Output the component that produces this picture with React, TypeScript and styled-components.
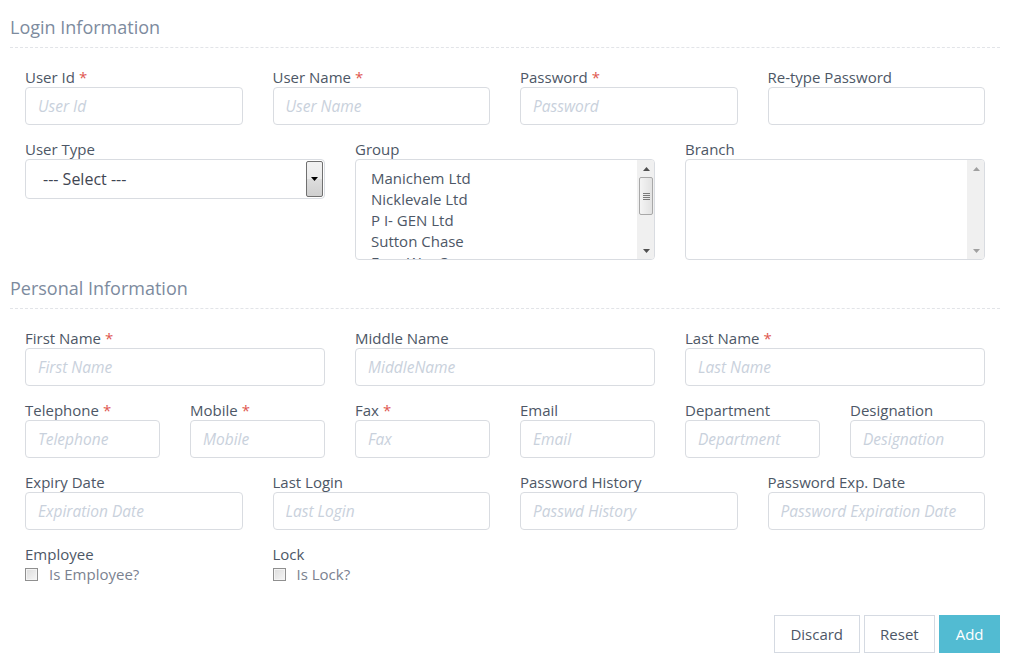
import React from "react";
import styled, { createGlobalStyle } from "styled-components";

const Global = createGlobalStyle`
  html, body { margin: 0; padding: 0; background: #fff; }
  body { font-family: "Open Sans", "Noto Sans", sans-serif; color: #4d5766; }
  * { box-sizing: border-box; }
`;

const Page = styled.div`
  padding: 0 10px;
  width: 1010px;
`;

const Heading = styled.h3<{ $first?: boolean }>`
  margin: 0;
  padding-top: ${(p) => (p.$first ? "14px" : "0")};
  padding-bottom: 7px;
  font-size: 18px;
  line-height: 26px;
  font-weight: 400;
  color: #7d8b9e;
  border-bottom: 1px dashed #e2e4e8;
  margin-bottom: 20px;
`;

const Row = styled.div<{ $cols: number }>`
  display: grid;
  grid-template-columns: repeat(${(p) => p.$cols}, 1fr);
  align-items: start;
`;

const Col = styled.div`
  padding: 0 15px;
  margin-bottom: 15px;
  min-width: 0;
`;

const Label = styled.label`
  display: block;
  font-size: 15px;
  line-height: 19px;
  color: #4d5766;
  white-space: nowrap;
`;

const Req = styled.span`
  color: #e0574f;
  margin-left: 4px;
`;

const Input = styled.input`
  display: block;
  width: 100%;
  height: 38px;
  border: 1px solid #d9dce1;
  border-radius: 4px;
  padding: 0 12px;
  font-family: inherit;
  font-size: 15.5px;
  color: #4d5766;
  outline: none;
  background: #fff;
  &::placeholder {
    color: #c9d1dc;
    font-style: italic;
  }
`;

const SelectBox = styled.div`
  display: flex;
  align-items: stretch;
  height: 40px;
  border: 1px solid #d9dce1;
  border-radius: 4px;
  background: #fff;
  overflow: hidden;
  padding: 1px 1px 1px 0;
`;

const SelectText = styled.span`
  flex: 1;
  display: flex;
  align-items: center;
  padding-left: 17px;
  font-size: 16px;
  color: #3f4652;
`;

const DropButton = styled.span`
  width: 17px;
  display: flex;
  align-items: center;
  justify-content: center;
  border: 1px solid #707070;
  border-radius: 2px;
  background: linear-gradient(#f2f2f2, #ebebeb 50%, #dddddd 51%, #cfcfcf);
`;

const ListBox = styled.div`
  display: flex;
  height: 101px;
  border: 1px solid #d9dce1;
  border-radius: 4px;
  background: #fff;
  overflow: hidden;
`;

const ListItems = styled.ul`
  flex: 1;
  margin: 0;
  padding: 8px 15px;
  list-style: none;
  overflow: hidden;
`;

const ListItem = styled.li`
  font-size: 15px;
  line-height: 21px;
  color: #4d5766;
  white-space: nowrap;
`;

const ScrollBar = styled.div`
  width: 17px;
  display: flex;
  flex-direction: column;
  background: #f0f0f0;
  border-left: 1px solid #f0f0f0;
`;

const ScrollArrow = styled.div`
  height: 17px;
  display: flex;
  align-items: center;
  justify-content: center;
`;

const ScrollTrack = styled.div`
  flex: 1;
  display: flex;
  flex-direction: column;
`;

const Thumb = styled.div`
  height: 38px;
  margin: 0 1px;
  border: 1px solid #a8a8a8;
  border-radius: 2px;
  background: linear-gradient(90deg, #f4f4f4, #e2e2e2);
  display: flex;
  align-items: center;
  justify-content: center;
`;

const Grip = styled.div`
  width: 7px;
  display: flex;
  flex-direction: column;
  gap: 1px;
  & > span {
    display: block;
    height: 1px;
    background: #7a7a7a;
  }
`;

const CheckRow = styled.label`
  display: flex;
  align-items: center;
  gap: 11px;
  font-size: 15px;
  line-height: 20px;
  color: #7b8290;
`;

const CheckBox = styled.span`
  width: 13px;
  height: 13px;
  border: 1px solid #8f8f8f;
  background: linear-gradient(135deg, #dcdcdc, #f6f6f6);
  box-shadow: inset 0 0 0 1px #f4f4f4;
`;

const Actions = styled.div`
  display: flex;
  justify-content: flex-end;
  gap: 4px;
  margin-top: 16px;
`;

const Button = styled.button<{ $primary?: boolean }>`
  height: 38px;
  padding: 0 15.5px;
  font-family: inherit;
  font-size: 15px;
  border: 1px solid ${(p) => (p.$primary ? "#52bbd2" : "#d5dae2")};
  background: ${(p) => (p.$primary ? "#52bbd2" : "#fff")};
  color: ${(p) => (p.$primary ? "#fff" : "#4d5766")};
  border-radius: 0;
  cursor: pointer;
`;

const Up = ({ c = "#606060" }: { c?: string }) => (
  <svg width="7" height="4" viewBox="0 0 7 4"><path d="M3.5 0 L7 4 L0 4 Z" fill={c} /></svg>
);
const Down = ({ c = "#606060" }: { c?: string }) => (
  <svg width="7" height="4" viewBox="0 0 7 4"><path d="M0 0 L7 0 L3.5 4 Z" fill={c} /></svg>
);

type F = { label: string; ph?: string; req?: boolean };

const Field = ({ label, ph, req }: F) => (
  <Col>
    <Label>
      {label}
      {req && <Req>*</Req>}
    </Label>
    <Input placeholder={ph ?? ""} />
  </Col>
);

const Scroll = ({ thumb }: { thumb: boolean }) => (
  <ScrollBar>
    <ScrollArrow><Up c={thumb ? "#505050" : "#a0a0a0"} /></ScrollArrow>
    <ScrollTrack>
      {thumb && (
        <Thumb>
          <Grip><span /><span /><span /><span /></Grip>
        </Thumb>
      )}
    </ScrollTrack>
    <ScrollArrow><Down c={thumb ? "#505050" : "#a0a0a0"} /></ScrollArrow>
  </ScrollBar>
);

export default function App() {
  return (
    <Page>
      <Global />
      <Heading $first>Login Information</Heading>
      <Row $cols={4}>
        <Field label="User Id" ph="User Id" req />
        <Field label="User Name" ph="User Name" req />
        <Field label="Password" ph="Password" req />
        <Field label="Re-type Password" />
      </Row>
      <Row $cols={3}>
        <Col>
          <Label>User Type</Label>
          <SelectBox>
            <SelectText>--- Select ---</SelectText>
            <DropButton><Down c="#000" /></DropButton>
          </SelectBox>
        </Col>
        <Col>
          <Label>Group</Label>
          <ListBox>
            <ListItems>
              <ListItem>Manichem Ltd</ListItem>
              <ListItem>Nicklevale Ltd</ListItem>
              <ListItem>P I- GEN Ltd</ListItem>
              <ListItem>Sutton Chase</ListItem>
              <ListItem>Four Way 3</ListItem>
            </ListItems>
            <Scroll thumb />
          </ListBox>
        </Col>
        <Col>
          <Label>Branch</Label>
          <ListBox>
            <ListItems />
            <Scroll thumb={false} />
          </ListBox>
        </Col>
      </Row>
      <Heading>Personal Information</Heading>
      <Row $cols={3}>
        <Field label="First Name" ph="First Name" req />
        <Field label="Middle Name" ph="MiddleName" />
        <Field label="Last Name" ph="Last Name" req />
      </Row>
      <Row $cols={6}>
        <Field label="Telephone" ph="Telephone" req />
        <Field label="Mobile" ph="Mobile" req />
        <Field label="Fax" ph="Fax" req />
        <Field label="Email" ph="Email" />
        <Field label="Department" ph="Department" />
        <Field label="Designation" ph="Designation" />
      </Row>
      <Row $cols={4}>
        <Field label="Expiry Date" ph="Expiration Date" />
        <Field label="Last Login" ph="Last Login" />
        <Field label="Password History" ph="Passwd History" />
        <Field label="Password Exp. Date" ph="Password Expiration Date" />
      </Row>
      <Row $cols={4}>
        <Col>
          <Label>Employee</Label>
          <CheckRow><CheckBox />Is Employee?</CheckRow>
        </Col>
        <Col>
          <Label>Lock</Label>
          <CheckRow><CheckBox />Is Lock?</CheckRow>
        </Col>
      </Row>
      <Actions>
        <Button>Discard</Button>
        <Button>Reset</Button>
        <Button $primary>Add</Button>
      </Actions>
    </Page>
  );
}
